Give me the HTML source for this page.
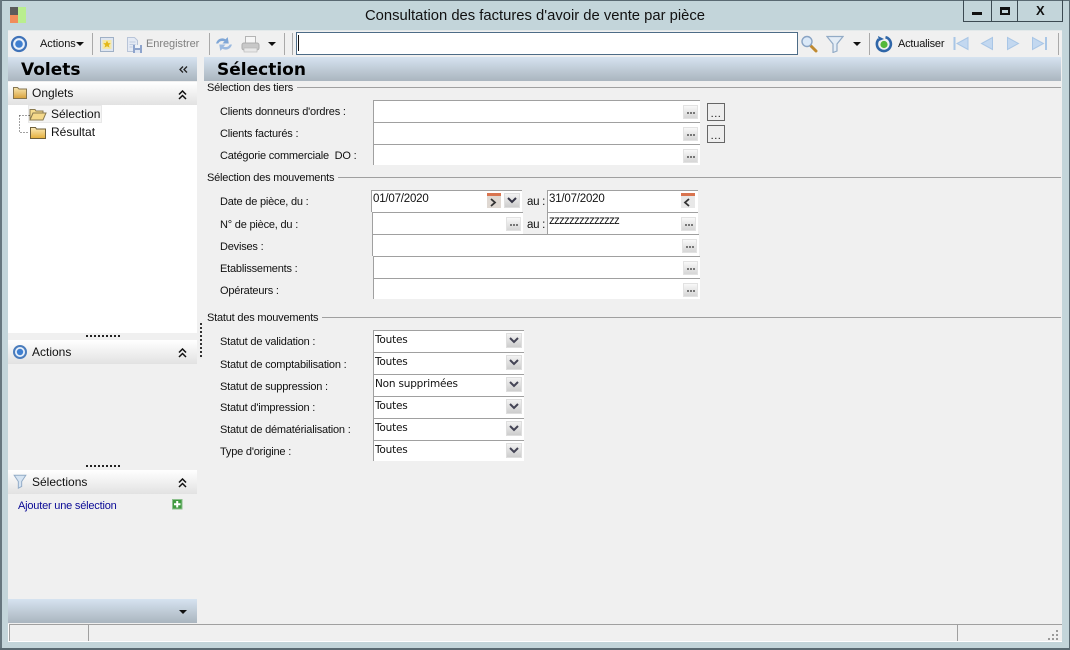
<!DOCTYPE html>
<html lang="fr">
<head>
<meta charset="utf-8">
<title>Consultation des factures d'avoir de vente par pièce</title>
<style>
html,body{margin:0;padding:0}
body{width:1070px;height:650px;overflow:hidden;position:relative;background:#c3d5da;font-family:"Liberation Sans",sans-serif;font-size:11px;color:#111}
div,svg{position:absolute}
.t{white-space:nowrap;line-height:14px;height:14px;letter-spacing:-.2px}
.u{font-size:12px;letter-spacing:0}
.v{font-size:11px;letter-spacing:-.05px}
.d{font-size:11.5px;letter-spacing:-.2px}
.o{font-family:"DejaVu Sans",sans-serif;font-size:10.5px;letter-spacing:-.2px}
.g{font-family:"DejaVu Sans",sans-serif;font-weight:bold;font-size:17px;line-height:20px;height:20px;letter-spacing:0;color:#000}
.f{background:#fff;border-top:1px solid #a0a0a0;border-left:1px solid #a0a0a0;box-sizing:border-box}
.b{width:15px;height:14px;background:linear-gradient(#f8f8f8,#d6d6d6);border:1px solid #e2e2e2;box-sizing:border-box}
.b::after{content:"";position:absolute;left:3px;top:6px;width:8px;height:2px;background:repeating-linear-gradient(90deg,#777 0 2px,transparent 2px 3px)}
.c{width:16px;height:15px;background:linear-gradient(#f2f2f2,#cdcdcd);border:1px solid #dedede;box-sizing:border-box}
.h{background:linear-gradient(#d6e3f0,#aab5bf)}
.p{background:linear-gradient(#fff,#e2e2e2)}
.l{height:1px;background:#a0a0a0}
.s{width:1px;height:22px;background:#a9a9a9;top:33px}
.k{width:18px;height:18px;box-sizing:border-box;border:1px solid #666;background:#eee;font-size:11px;line-height:21px;text-align:center;letter-spacing:.5px}
</style>
</head>
<body>
<div style="left:0;top:0;width:1070px;height:1px;background:#5a6a72"></div>
<div style="left:0;top:0;width:2px;height:650px;background:#66767e"></div>
<div style="left:1069px;top:0;width:1px;height:650px;background:#5a6a72"></div>
<div style="left:0;top:648px;width:1070px;height:2px;background:#5a6a72"></div>

<div style="left:10px;top:7px;width:8px;height:8px;background:#5b5b5b"></div>
<div style="left:10px;top:15px;width:8px;height:8px;background:#f08c5a"></div>
<div style="left:18px;top:7px;width:8px;height:16px;background:#b9ee8e"></div>
<div class="t" style="left:0;top:8px;width:1070px;text-align:center;font-size:14.8px;line-height:16px;height:16px;letter-spacing:0">Consultation des factures d'avoir de vente par pièce</div>

<div style="left:963px;top:0;width:100px;height:22px;box-sizing:border-box;border:1px solid #3c4a52;border-top:0"></div>
<div style="left:991px;top:0;width:1px;height:21px;background:#3c4a52"></div>
<div style="left:1017px;top:0;width:1px;height:21px;background:#3c4a52"></div>
<div style="left:972px;top:12px;width:10px;height:3px;background:#111"></div>
<div style="left:1000px;top:7px;width:10px;height:8px;box-sizing:border-box;border:2px solid #111;border-top-width:3px"></div>
<div class="t" style="left:1036px;top:3px;font-weight:bold;font-size:13px;line-height:16px;height:16px;letter-spacing:0">X</div>

<div style="left:8px;top:31px;width:1054px;height:611px;background:#f0f0f0"></div>
<div style="left:8px;top:30px;width:1054px;height:1px;background:#e3e9ea"></div>

<svg style="left:10px;top:35px" width="18" height="18" viewBox="0 0 18 18"><circle cx="9" cy="9" r="7" fill="#e8f0fa" stroke="#3f72b8" stroke-width="2.2"/><circle cx="9" cy="9" r="3.8" fill="#3f7fd0"/></svg>
<div class="t v" style="left:40px;top:37px">Actions</div>
<svg style="left:76px;top:42px" width="9" height="5"><path d="M0 0h8L4 4z" fill="#111"/></svg>
<div class="s" style="left:92px"></div>
<svg style="left:99px;top:36px" width="16" height="17" viewBox="0 0 16 17"><rect x="1.500" y="1.500" width="13" height="14" fill="#dfe6f0" stroke="#9fb0c6"/><rect x="3.500" y="4" width="9" height="9" fill="#f5e8a8"/><path d="M8 4.500l1.200 2.600 2.600.2-2 1.700.7 2.600L8 10.200 5.500 11.600l.7-2.600-2-1.700 2.600-.2z" fill="#e4b818"/></svg>
<svg style="left:126px;top:36px" width="17" height="18" viewBox="0 0 17 18"><path d="M1.500 1.500h7l3 3v11h-10z" fill="#e4eaf4" stroke="#b8c4d8"/><path d="M3.500 6h6M3.500 8.500h6M3.500 11h3" stroke="#c0cce0"/><rect x="7" y="9" width="9" height="8" fill="#8ea4cc"/><rect x="9" y="9" width="5" height="3" fill="#eef2f8"/><rect x="9" y="14" width="5" height="3" fill="#dfe6f2"/></svg>
<div class="t v" style="left:146px;top:37px;color:#808080">Enregistrer</div>
<div class="s" style="left:209px"></div>
<svg style="left:215px;top:35px" width="18" height="18" viewBox="0 0 17 17"><path d="M1 8c1-4 5-6 9-4l2-2 1 6-6 0 2-2c-3-1-5 0-6 2z" fill="#7fa6d6"/><path d="M16 9c-1 4-5 6-9 4l-2 2-1-6 6 0-2 2c3 1 5 0 6-2z" fill="#9cbae0"/></svg>
<svg style="left:241px;top:35px" width="19" height="18" viewBox="0 0 19 18"><rect x="4.500" y="1.500" width="10" height="7" fill="#f6f6f6" stroke="#b4b4b4"/><rect x="1" y="8" width="17" height="7" rx="2" fill="#c8c8c8" stroke="#adadad"/><rect x="3" y="13" width="13" height="4" fill="#e8e8e8" stroke="#b4b4b4" stroke-width=".6"/></svg>
<svg style="left:268px;top:42px" width="9" height="5"><path d="M0 0h8L4 4z" fill="#111"/></svg>
<div class="s" style="left:284px"></div>
<div class="s" style="left:292px"></div>

<div style="left:296px;top:32px;width:502px;height:23px;box-sizing:border-box;background:#fff;border:1px solid #4d6c87"></div>
<div style="left:298px;top:35px;width:1px;height:16px;background:#111"></div>

<svg style="left:800px;top:34px" width="18" height="19" viewBox="0 0 18 19"><path d="M10.500 11.500l5.500 5.500" stroke="#c08a30" stroke-width="3" stroke-linecap="round"/><circle cx="7" cy="7.500" r="5" fill="#dbe9f8" stroke="#8aa4c4" stroke-width="1.400"/></svg>
<svg style="left:826px;top:35px" width="18" height="18" viewBox="0 0 18 18"><path d="M1 1.500h16L11 9v7l-4 1.500V9z" fill="#e4edf6" stroke="#92abc6" stroke-width="1.200"/></svg>
<svg style="left:853px;top:42px" width="9" height="5"><path d="M0 0h8L4 4z" fill="#111"/></svg>
<div class="s" style="left:869px"></div>
<svg style="left:875px;top:35px" width="18" height="18" viewBox="0 0 18 18"><path d="M10.500 2.200A7 7 0 1 1 3.800 4.200" fill="none" stroke="#2f66a8" stroke-width="2.600"/><path d="M3 1l1 5 5-2z" fill="#2f66a8"/><circle cx="9" cy="9.500" r="3.600" fill="#55b83a"/></svg>
<div class="t v" style="left:898px;top:37px;letter-spacing:-.2px">Actualiser</div>
<svg style="left:953px;top:36px" width="17" height="16"><path d="M1.500 1v13" stroke="#a9c6e6" stroke-width="2"/><path d="M15 1.500v12L4 7.500z" fill="#c3d8f0" stroke="#a9c6e6"/></svg>
<svg style="left:980px;top:36px" width="14" height="16"><path d="M12.500 1.500v12L1.500 7.500z" fill="#c3d8f0" stroke="#a9c6e6"/></svg>
<svg style="left:1006px;top:36px" width="14" height="16"><path d="M1.500 1.500v12L12.500 7.500z" fill="#c3d8f0" stroke="#a9c6e6"/></svg>
<svg style="left:1031px;top:36px" width="17" height="16"><path d="M15 1v13" stroke="#a9c6e6" stroke-width="2"/><path d="M1.500 1.500v12L12.500 7.500z" fill="#c3d8f0" stroke="#a9c6e6"/></svg>
<div class="s" style="left:1058px"></div>

<!-- left panel -->
<div class="h" style="left:8px;top:57px;width:189px;height:24px"></div>
<div class="t g" style="left:21px;top:60px">Volets</div>
<svg style="left:179px;top:66px" width="9" height="8"><path d="M4 .5L1 3.500 4 6.500M8 .5L5 3.500 8 6.500" fill="none" stroke="#222" stroke-width="1.300"/></svg>

<div class="p" style="left:8px;top:82px;width:189px;height:23px"></div>
<svg style="left:13px;top:86px" width="14" height="13"><defs><linearGradient id="fg" x1="0" y1="0" x2="0" y2="1"><stop offset="0" stop-color="#f8e6b0"/><stop offset="1" stop-color="#d8a23c"/></linearGradient></defs><path d="M.5 12.500V1.500h4l1.500 1.500h7.500v9.500z" fill="url(#fg)" stroke="#857550"/></svg>
<div class="t u" style="left:32px;top:86px">Onglets</div>
<svg style="left:178px;top:90px" width="9" height="10"><path d="M1 4.500L4.500 1 8 4.500M1 9L4.500 5.500 8 9" fill="none" stroke="#111" stroke-width="1.500"/></svg>

<div style="left:8px;top:105px;width:189px;height:228px;background:#fff"></div>
<div style="left:28px;top:105px;width:74px;height:18px;background:#f4f4f4;border:1px solid #e8e8e8;box-sizing:border-box"></div>
<svg style="left:19px;top:112px" width="12" height="22"><path d="M.5 3.500h10M.5 3.500v17h10" fill="none" stroke="#444" stroke-width="1" stroke-dasharray="1 2"/></svg>
<svg style="left:29px;top:108px" width="18" height="13"><path d="M1 12V1.500h5l1 1.500h7v2" fill="#f6dc8e" stroke="#8a7a50"/><path d="M1 12l3-7h13l-3 7z" fill="#f5d98a" stroke="#8a7a50"/></svg>
<div class="t u" style="left:51px;top:107px">Sélection</div>
<svg style="left:30px;top:126px" width="16" height="13"><defs><linearGradient id="fh" x1="0" y1="0" x2="0" y2="1"><stop offset="0" stop-color="#fbeab8"/><stop offset="1" stop-color="#e4ae3a"/></linearGradient></defs><path d="M.5 12.500V1.500h5l1 1.500h9v9.500z" fill="url(#fh)" stroke="#6e5f3a"/></svg>
<div class="t u" style="left:51px;top:125px">Résultat</div>

<div style="left:86px;top:335px;width:35px;height:2px;background:repeating-linear-gradient(90deg,#222 0 2px,transparent 2px 4px)"></div>
<div class="p" style="left:8px;top:340px;width:189px;height:24px"></div>
<svg style="left:12px;top:344px" width="16" height="16"><circle cx="8" cy="8" r="6" fill="#e8f0fa" stroke="#4a7cbc" stroke-width="2"/><circle cx="8" cy="8" r="3.200" fill="#3f7fd0"/></svg>
<div class="t u" style="left:32px;top:345px">Actions</div>
<svg style="left:178px;top:348px" width="9" height="10"><path d="M1 4.500L4.500 1 8 4.500M1 9L4.500 5.500 8 9" fill="none" stroke="#111" stroke-width="1.500"/></svg>

<div style="left:200px;top:323px;width:2px;height:34px;background:repeating-linear-gradient(#333 0 2px,transparent 2px 4px)"></div>

<div style="left:86px;top:465px;width:35px;height:2px;background:repeating-linear-gradient(90deg,#222 0 2px,transparent 2px 4px)"></div>
<div class="p" style="left:8px;top:470px;width:189px;height:24px"></div>
<svg style="left:13px;top:474px" width="14" height="15" viewBox="0 0 16 18"><path d="M1 1.500h14L10 9v6l-4 2V9z" fill="#d6e4f2" stroke="#92abc6" stroke-width="1.200"/></svg>
<div class="t u" style="left:32px;top:475px">Sélections</div>
<svg style="left:178px;top:478px" width="9" height="10"><path d="M1 4.500L4.500 1 8 4.500M1 9L4.500 5.500 8 9" fill="none" stroke="#111" stroke-width="1.500"/></svg>
<div class="t" style="left:18px;top:499px;color:#0a0a96">Ajouter une sélection</div>
<svg style="left:172px;top:499px" width="11" height="11"><rect x=".5" y=".5" width="9.500" height="9.500" fill="#3f9a3f" stroke="#8cc08c"/><path d="M5.200 2v6.500M2 5.200h6.500" stroke="#fff" stroke-width="2"/></svg>

<div class="h" style="left:8px;top:599px;width:189px;height:24px"></div>
<svg style="left:179px;top:610px" width="9" height="5"><path d="M0 0h8L4 4z" fill="#111"/></svg>

<!-- status bar -->
<div style="left:8px;top:624px;width:1054px;height:18px;border-top:1px solid #a0a0a0;border-bottom:1px solid #fff;box-sizing:border-box"></div>
<div style="left:8px;top:624px;width:1px;height:18px;background:#fff"></div>
<div style="left:9px;top:624px;width:1px;height:17px;background:#a0a0a0"></div>
<div style="left:88px;top:624px;width:1px;height:17px;background:#a0a0a0"></div>
<div style="left:957px;top:624px;width:1px;height:17px;background:#a0a0a0"></div>
<svg style="left:1047px;top:629px" width="12" height="11" fill="#9a9a9a"><rect x="9" y="1" width="2" height="2"/><rect x="5" y="5" width="2" height="2"/><rect x="9" y="5" width="2" height="2"/><rect x="1" y="9" width="2" height="2"/><rect x="5" y="9" width="2" height="2"/><rect x="9" y="9" width="2" height="2"/></svg>

<!-- main header -->
<div class="h" style="left:204px;top:57px;width:857px;height:24px"></div>
<div class="t g" style="left:217px;top:60px">Sélection</div>

<!-- group titles -->
<div class="t" style="left:207px;top:81px">Sélection des tiers</div>
<div class="l" style="left:297px;top:87px;width:764px"></div>
<div class="t" style="left:207px;top:171px">Sélection des mouvements</div>
<div class="l" style="left:338px;top:177px;width:723px"></div>
<div class="t" style="left:207px;top:311px">Statut des mouvements</div>
<div class="l" style="left:322px;top:317px;width:739px"></div>

<!-- labels -->
<div class="t" style="left:220px;top:105px">Clients donneurs d'ordres :</div>
<div class="t" style="left:220px;top:127px">Clients facturés :</div>
<div class="t" style="left:220px;top:149px">Catégorie commerciale&nbsp; DO :</div>
<div class="t" style="left:220px;top:195px">Date de pièce, du :</div>
<div class="t" style="left:220px;top:218px">N° de pièce, du :</div>
<div class="t" style="left:220px;top:240px">Devises :</div>
<div class="t" style="left:220px;top:262px">Etablissements :</div>
<div class="t" style="left:220px;top:284px">Opérateurs :</div>
<div class="t" style="left:220px;top:335px">Statut de validation :</div>
<div class="t" style="left:220px;top:358px">Statut de comptabilisation :</div>
<div class="t" style="left:220px;top:380px">Statut de suppression :</div>
<div class="t" style="left:220px;top:401px">Statut d'impression :</div>
<div class="t" style="left:220px;top:423px">Statut de dématérialisation :</div>
<div class="t" style="left:220px;top:445px">Type d'origine :</div>

<!-- tiers fields -->
<div class="f" style="left:373px;top:100px;width:327px;height:22px"></div>
<div class="b" style="left:683px;top:105px"></div>
<div class="k" style="left:707px;top:103px">...</div>
<div class="f" style="left:373px;top:122px;width:327px;height:22px"></div>
<div class="b" style="left:683px;top:127px"></div>
<div class="k" style="left:707px;top:125px">...</div>
<div class="f" style="left:373px;top:144px;width:327px;height:21px"></div>
<div class="b" style="left:683px;top:149px"></div>

<!-- dates -->
<div class="f" style="left:371px;top:190px;width:151px;height:22px"></div>
<div class="t d" style="left:373px;top:192px">01/07/2020</div>
<div style="left:487px;top:193px;width:14px;height:15px;background:#dfd8d2;border-top:3px solid #d9744f;box-sizing:border-box"></div>
<svg style="left:489px;top:198px" width="9" height="9"><path d="M2 1l4 3.500-4 3.500" fill="none" stroke="#333" stroke-width="1.800"/></svg>
<div class="c" style="left:504px;top:193px"></div>
<svg style="left:507px;top:197px" width="10" height="7"><path d="M1 1l4 4 4-4" fill="none" stroke="#334" stroke-width="2"/></svg>
<div class="t" style="left:527px;top:195px;font-size:11.5px;letter-spacing:-.3px">au :</div>
<div class="f" style="left:547px;top:190px;width:151px;height:22px"></div>
<div class="t d" style="left:549px;top:192px">31/07/2020</div>
<div style="left:681px;top:193px;width:14px;height:15px;background:#e8e8e8;border-top:3px solid #d9744f;box-sizing:border-box"></div>
<svg style="left:683px;top:198px" width="9" height="9"><path d="M6 1L2 4.500 6 8" fill="none" stroke="#333" stroke-width="1.800"/></svg>

<!-- pieces -->
<div class="f" style="left:372px;top:212px;width:151px;height:22px"></div>
<div class="b" style="left:506px;top:217px"></div>
<div class="t" style="left:527px;top:218px;font-size:11.5px;letter-spacing:-.3px">au :</div>
<div class="f" style="left:547px;top:212px;width:151px;height:22px"></div>
<div class="t" style="left:549px;top:214px;font-size:11.5px;letter-spacing:-.75px">zzzzzzzzzzzzzz</div>
<div class="b" style="left:681px;top:217px"></div>

<div class="f" style="left:372px;top:234px;width:327px;height:22px"></div>
<div class="b" style="left:682px;top:239px"></div>
<div class="f" style="left:373px;top:256px;width:327px;height:22px"></div>
<div class="b" style="left:683px;top:261px"></div>
<div class="f" style="left:373px;top:278px;width:327px;height:21px"></div>
<div class="b" style="left:683px;top:283px"></div>

<!-- combos -->
<div class="f" style="left:373px;top:330px;width:151px;height:22px"></div>
<div class="t o" style="left:375px;top:333px">Toutes</div>
<div class="c" style="left:506px;top:333px"></div>
<svg style="left:509px;top:337px" width="10" height="7"><path d="M1 1l4 4 4-4" fill="none" stroke="#445" stroke-width="2"/></svg>

<div class="f" style="left:373px;top:352px;width:151px;height:22px"></div>
<div class="t o" style="left:375px;top:355px">Toutes</div>
<div class="c" style="left:506px;top:355px"></div>
<svg style="left:509px;top:359px" width="10" height="7"><path d="M1 1l4 4 4-4" fill="none" stroke="#445" stroke-width="2"/></svg>

<div class="f" style="left:373px;top:374px;width:151px;height:22px"></div>
<div class="t o" style="left:375px;top:377px">Non supprimées</div>
<div class="c" style="left:506px;top:377px"></div>
<svg style="left:509px;top:381px" width="10" height="7"><path d="M1 1l4 4 4-4" fill="none" stroke="#445" stroke-width="2"/></svg>

<div class="f" style="left:373px;top:396px;width:151px;height:22px"></div>
<div class="t o" style="left:375px;top:399px">Toutes</div>
<div class="c" style="left:506px;top:399px"></div>
<svg style="left:509px;top:403px" width="10" height="7"><path d="M1 1l4 4 4-4" fill="none" stroke="#445" stroke-width="2"/></svg>

<div class="f" style="left:373px;top:418px;width:151px;height:22px"></div>
<div class="t o" style="left:375px;top:421px">Toutes</div>
<div class="c" style="left:506px;top:421px"></div>
<svg style="left:509px;top:425px" width="10" height="7"><path d="M1 1l4 4 4-4" fill="none" stroke="#445" stroke-width="2"/></svg>

<div class="f" style="left:373px;top:440px;width:151px;height:21px"></div>
<div class="t o" style="left:375px;top:443px">Toutes</div>
<div class="c" style="left:506px;top:443px"></div>
<svg style="left:509px;top:447px" width="10" height="7"><path d="M1 1l4 4 4-4" fill="none" stroke="#445" stroke-width="2"/></svg>
</body>
</html>
